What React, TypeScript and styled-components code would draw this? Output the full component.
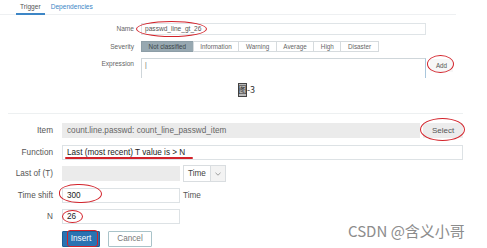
import React from 'react';
import styled, { createGlobalStyle } from 'styled-components';

const Global = createGlobalStyle`
  html, body { margin: 0; padding: 0; background: #fff; }
  body { font-family: "Liberation Sans", Arial, sans-serif; }
`;

const Page = styled.div`
  position: relative;
  width: 487px;
  height: 248px;
  overflow: hidden;
  background: #fff;
  display: flex;
  flex-direction: column;
`;

/* ---------- top screenshot ---------- */
const TopPanel = styled.section`
  width: 456px;
  height: 78px;
  display: flex;
  flex-direction: column;
  overflow: hidden;
`;

const Tabs = styled.div`
  display: flex;
  height: 14px;
  border-bottom: 1px solid #eef0f2;
  padding-left: 16px;
  gap: 2px;
`;

const Tab = styled.span<{ $active?: boolean }>`
  font-size: 6.6px;
  line-height: 13px;
  padding: 0 4px;
  color: ${(p) => (p.$active ? '#555' : '#3d86c6')};
  border-bottom: 2px solid ${(p) => (p.$active ? '#3d86c6' : 'transparent')};
  height: 13px;
`;

const TopForm = styled.div`
  display: flex;
  flex-direction: column;
  gap: 6px;
  margin-top: 8px;
`;

const TopRow = styled.div`
  display: flex;
  align-items: flex-start;
`;

const TopLabel = styled.label<{ $h: number }>`
  width: 134px;
  margin-right: 7px;
  text-align: right;
  font-size: 6.6px;
  color: #666;
  line-height: ${(p) => p.$h}px;
`;

const Anchor = styled.div`
  position: relative;
  display: flex;
`;

const TopInput = styled.div`
  box-sizing: border-box;
  width: 285px;
  height: 12px;
  border: 1px solid #dfe4e7;
  font-size: 6.6px;
  line-height: 10px;
  padding-left: 3px;
  color: #555;
`;

const SeverityGroup = styled.div`
  display: flex;
  height: 11px;
`;

const SevButton = styled.span<{ $selected?: boolean }>`
  box-sizing: border-box;
  height: 11px;
  padding: 0 6.6px;
  font-size: 6.3px;
  line-height: 9px;
  border: 1px solid ${(p) => (p.$selected ? '#8d9ea7' : '#d6dbde')};
  margin-left: -1px;
  background: ${(p) => (p.$selected ? '#97a8b1' : '#fff')};
  color: ${(p) => (p.$selected ? '#3b4549' : '#666')};
  &:first-child { margin-left: 0; }
`;

const TextArea = styled.div`
  box-sizing: border-box;
  width: 285px;
  height: 21px;
  border: 1px solid #cfd6da;
  border-right-color: #a9c6dc;
  border-bottom: none;
  font-size: 6.6px;
  color: #666;
  padding: 1px 3px;
  line-height: 9px;
`;

const AddButton = styled.span`
  margin-left: 4px;
  width: 23px;
  height: 13px;
  margin-top: 1px;
  font-size: 6.3px;
  line-height: 13px;
  text-align: center;
  color: #555;
  background: #f7f7f7;
`;

const Caption = styled.div`
  display: flex;
  justify-content: center;
  padding-left: 6px;
  margin-top: 5px;
  height: 14px;
  font-family: "Noto Sans CJK SC", "Liberation Sans", sans-serif;
  font-size: 9px;
  line-height: 14px;
  color: #333;
`;

const Sel = styled.span`
  background: #b9b9b9;
  box-shadow: inset 0 0 0 1px #444;
  color: #333;
`;

/* ---------- bottom screenshot ---------- */
const BottomPanel = styled.section`
  margin-left: 8px;
  margin-top: 16px;
  width: 455px;
  border-top: 1px solid #edf0f1;
  padding-top: 9px;
  display: flex;
  flex-direction: column;
  gap: 6.6px;
`;

const Row = styled.div`
  display: flex;
  align-items: center;
  height: 15px;
`;

const Label = styled.label`
  width: 45px;
  margin-right: 9px;
  text-align: right;
  font-size: 8.2px;
  color: #555;
  white-space: nowrap;
`;

const Field = styled.div<{ $w?: number; $grey?: boolean }>`
  box-sizing: border-box;
  ${(p) => (p.$w ? `width: ${p.$w}px;` : 'flex: 1;')}
  height: 15px;
  border: 1px solid ${(p) => (p.$grey ? '#ebebeb' : '#dde2e5')};
  background: ${(p) => (p.$grey ? '#ebebeb' : '#fff')};
  font-size: 8.2px;
  line-height: 13px;
  padding-left: 4px;
  color: ${(p) => (p.$grey ? '#666' : '#222')};
  white-space: nowrap;
`;

const GrowAnchor = styled(Anchor)`
  flex: 1;
`;

const SelectButton = styled.span`
  margin-left: 3px;
  width: 40px;
  height: 15px;
  background: #ececec;
  font-size: 8px;
  line-height: 15px;
  text-align: center;
  color: #555;
`;

const Dropdown = styled.div`
  box-sizing: border-box;
  margin-left: 3px;
  width: 43px;
  height: 17px;
  border: 1px solid #d9dde0;
  display: flex;
  font-size: 8.2px;
  color: #444;
`;

const DropText = styled.span`
  flex: 1;
  padding-left: 4px;
  line-height: 15px;
`;

const DropArrow = styled.span`
  width: 14px;
  border-left: 1px solid #d9dde0;
  background: #f3f3f3;
  display: flex;
  align-items: center;
  justify-content: center;
`;

const Unit = styled.span`
  margin-left: 3px;
  font-size: 8.2px;
  color: #555;
`;

const Buttons = styled.div`
  display: flex;
  padding-left: 54px;
  gap: 8px;
  height: 16px;
`;

const Btn = styled.span<{ $primary?: boolean }>`
  box-sizing: border-box;
  height: 16px;
  width: ${(p) => (p.$primary ? 38 : 44)}px;
  font-size: 8.2px;
  line-height: 14px;
  text-align: center;
  border-radius: 1px;
  border: 1px solid ${(p) => (p.$primary ? '#1d5f96' : '#a9c3c9')};
  background: ${(p) => (p.$primary ? '#2a73b2' : '#fff')};
  color: ${(p) => (p.$primary ? '#fff' : '#777')};
`;

/* ---------- annotations ---------- */
const Mark = styled.span<{ $l: number; $t: number; $w: number; $h: number; $r?: string }>`
  position: absolute;
  left: ${(p) => p.$l}px;
  top: ${(p) => p.$t}px;
  width: ${(p) => p.$w}px;
  height: ${(p) => p.$h}px;
  border: 1.3px solid #d3222a;
  border-radius: ${(p) => p.$r ?? '50%'};
  box-sizing: border-box;
  pointer-events: none;
`;

const Underline = styled.span`
  position: absolute;
  left: 3px;
  top: 12.5px;
  width: 128px;
  height: 1.6px;
  background: #d3222a;
  border-radius: 1px;
`;

const Watermark = styled.div`
  position: absolute;
  left: 348px;
  top: 221px;
  font-family: "Noto Sans CJK SC", "Liberation Sans", sans-serif;
  font-size: 15px;
  line-height: 20px;
  color: #8c8c8c;
  white-space: nowrap;
`;

export default function App() {
  const severities = ['Not classified', 'Information', 'Warning', 'Average', 'High', 'Disaster'];
  return (
    <>
      <Global />
      <Page>
        <TopPanel>
          <Tabs>
            <Tab $active>Trigger</Tab>
            <Tab>Dependencies</Tab>
          </Tabs>
          <TopForm>
            <TopRow>
              <TopLabel $h={12}>Name</TopLabel>
              <Anchor>
                <TopInput>passwd_line_gt_26</TopInput>
                <Mark $l={-5} $t={-2} $w={71} $h={16} />
              </Anchor>
            </TopRow>
            <TopRow>
              <TopLabel $h={11}>Severity</TopLabel>
              <SeverityGroup>
                {severities.map((s, i) => (
                  <SevButton key={s} $selected={i === 0}>{s}</SevButton>
                ))}
              </SeverityGroup>
            </TopRow>
            <TopRow>
              <TopLabel $h={12}>Expression</TopLabel>
              <TextArea>|</TextArea>
              <Anchor>
                <AddButton>Add</AddButton>
                <Mark $l={1} $t={-3} $w={27} $h={18} />
              </Anchor>
            </TopRow>
          </TopForm>
        </TopPanel>

        <Caption>
          <Sel>图</Sel>-3
        </Caption>

        <BottomPanel>
          <Row>
            <Label>Item</Label>
            <Field $grey>count.line.passwd: count_line_passwd_item</Field>
            <Anchor>
              <SelectButton>Select</SelectButton>
              <Mark $l={0} $t={-5} $w={45} $h={23} />
            </Anchor>
          </Row>
          <Row>
            <Label>Function</Label>
            <GrowAnchor>
              <Field>Last (most recent) T value is &gt; N</Field>
              <Underline />
            </GrowAnchor>
          </Row>
          <Row>
            <Label>Last of (T)</Label>
            <Field $w={118} $grey />
            <Dropdown>
              <DropText>Time</DropText>
              <DropArrow>
                <svg width="6" height="4" viewBox="0 0 6 4">
                  <path d="M0.5 0.8 L3 3.2 L5.5 0.8" fill="none" stroke="#888" strokeWidth="0.8" />
                </svg>
              </DropArrow>
            </Dropdown>
          </Row>
          <Row>
            <Label>Time shift</Label>
            <Anchor>
              <Field $w={118}>300</Field>
              <Mark $l={-3} $t={-4} $w={43} $h={19} $r="45% 55% 50% 50%" />
            </Anchor>
            <Unit>Time</Unit>
          </Row>
          <Row>
            <Label>N</Label>
            <Anchor>
              <Field $w={118}>26</Field>
              <Mark $l={0} $t={1} $w={21} $h={13} />
            </Anchor>
          </Row>
          <Buttons>
            <Anchor>
              <Btn $primary>Insert</Btn>
              <Mark $l={5} $t={-1} $w={31} $h={17} $r="3px" />
            </Anchor>
            <Btn>Cancel</Btn>
          </Buttons>
        </BottomPanel>

        <Watermark>CSDN @含义小哥</Watermark>
      </Page>
    </>
  );
}
